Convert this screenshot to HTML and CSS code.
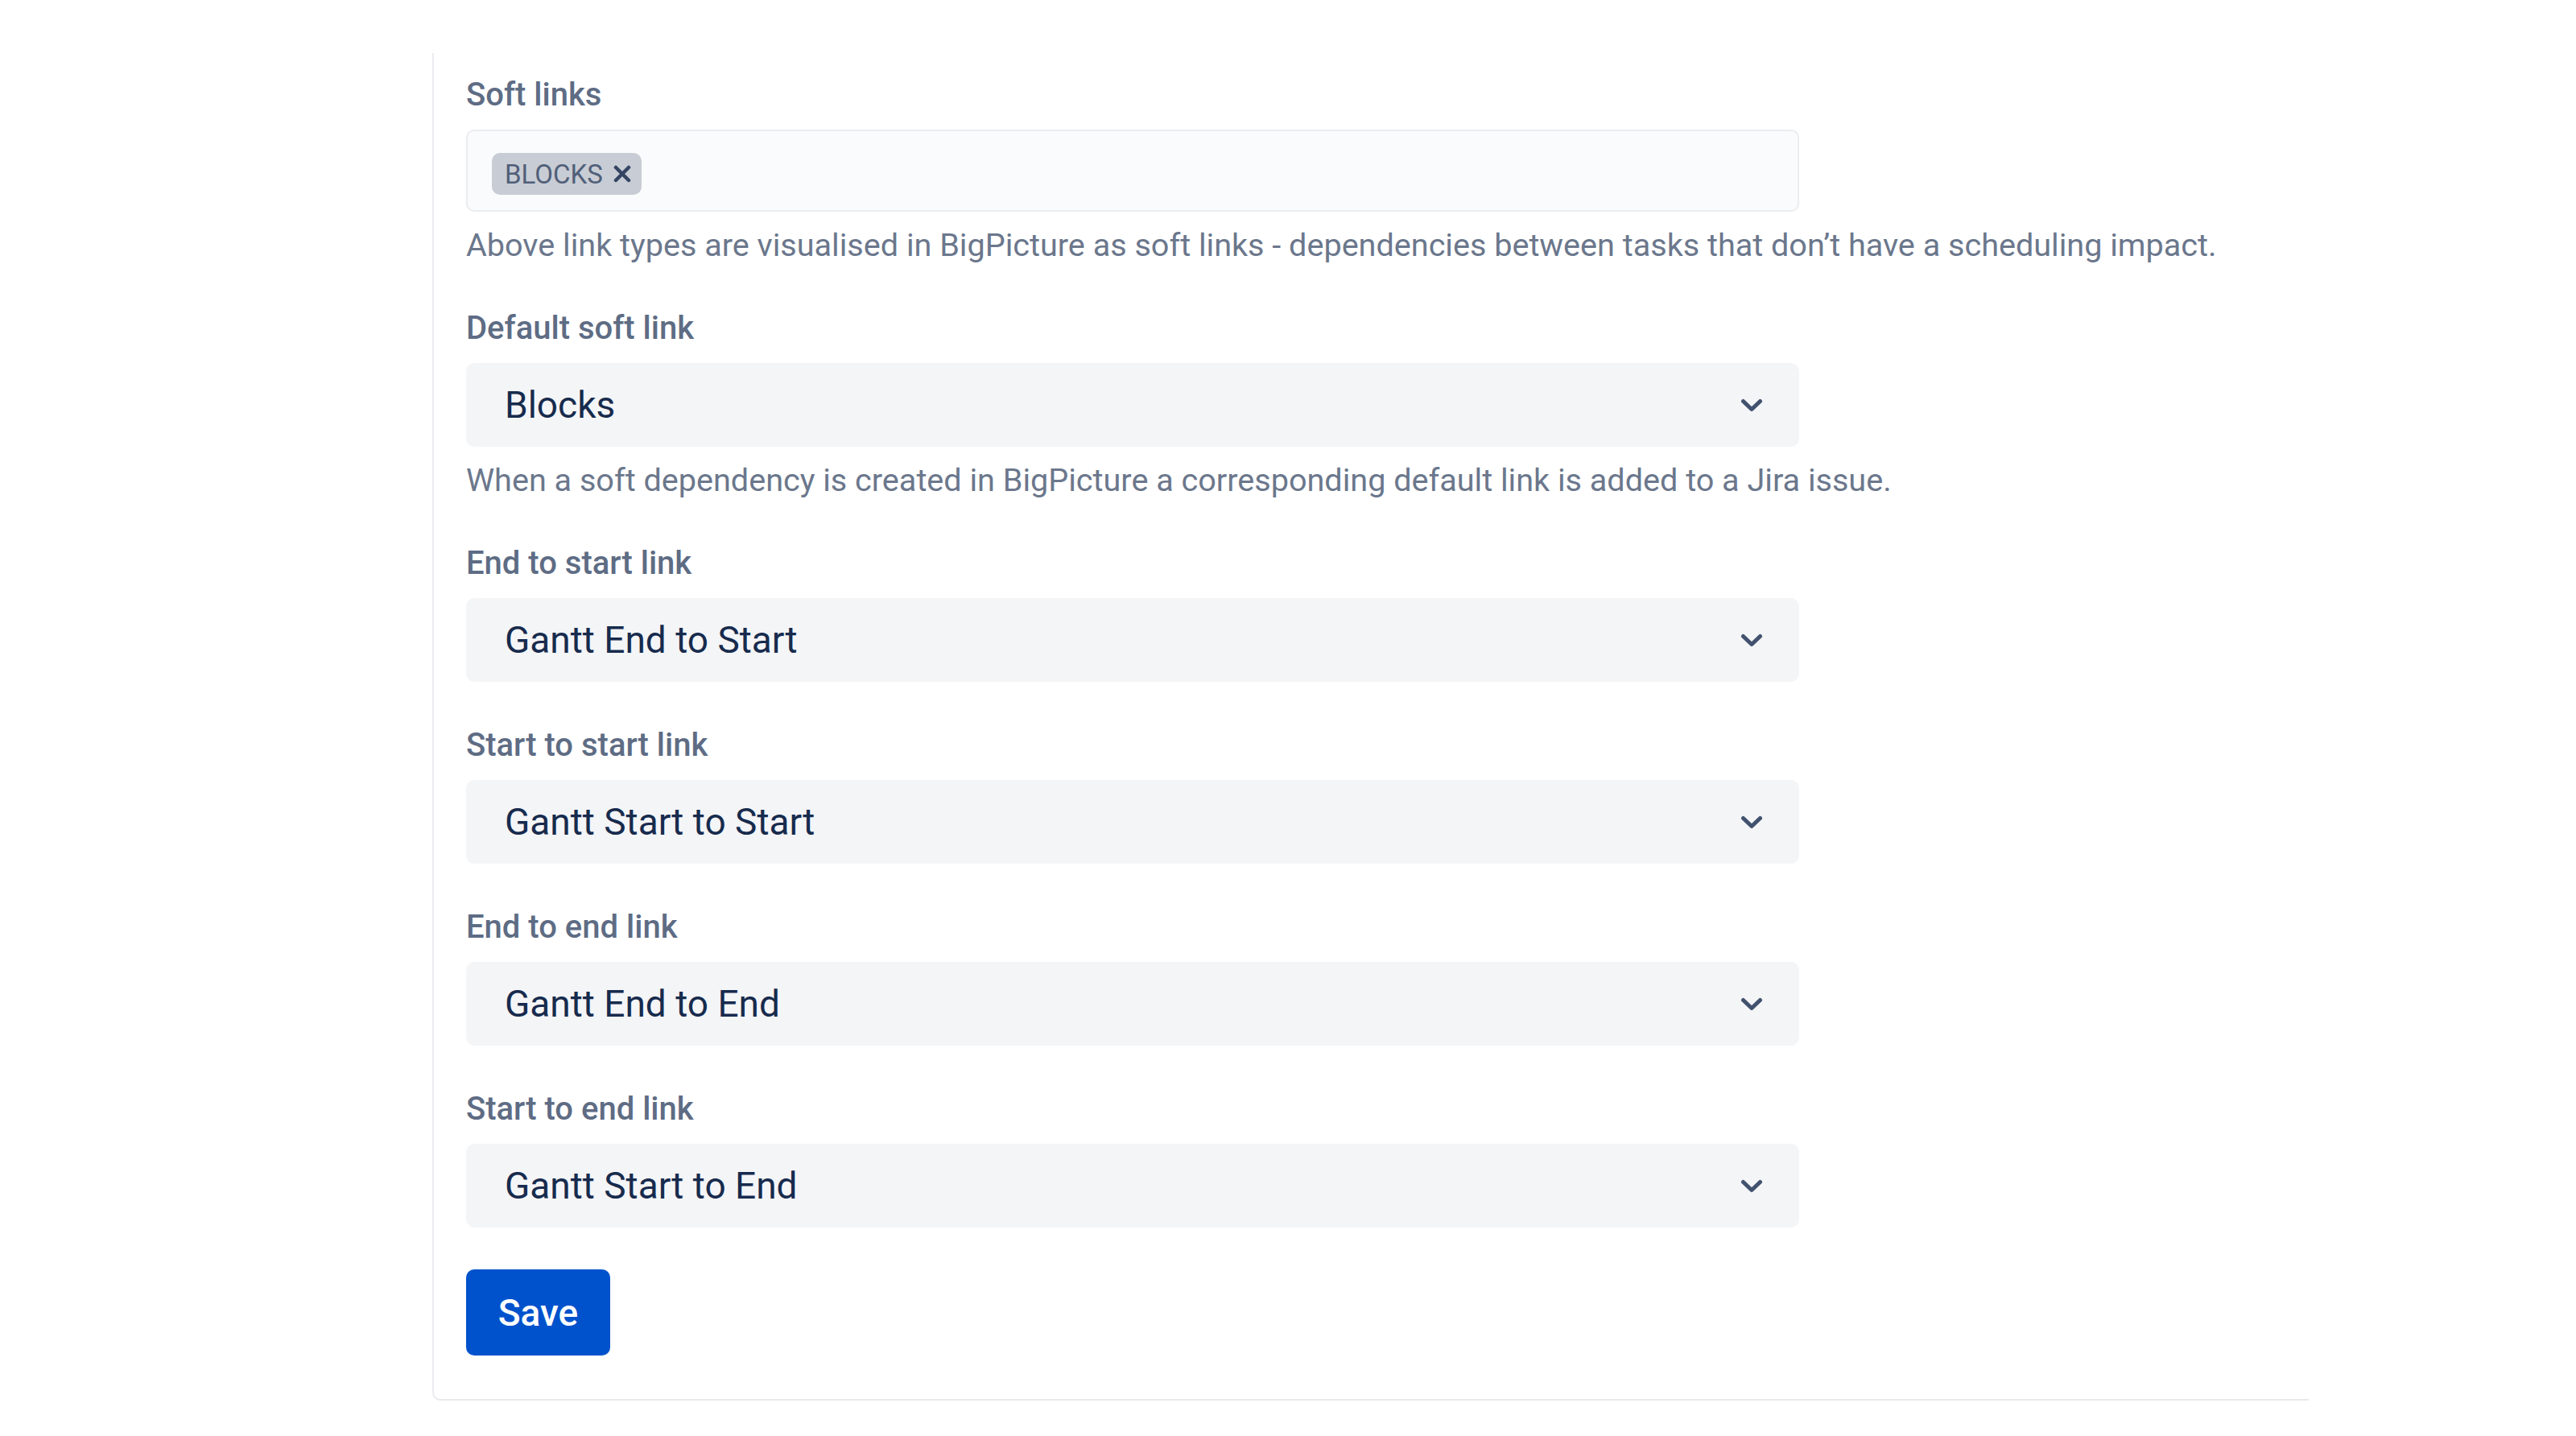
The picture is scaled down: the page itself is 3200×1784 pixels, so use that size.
FILE: index.html
```html
<!DOCTYPE html>
<html lang="en">
<head>
    <meta charset="UTF-8">
    <meta name="viewport" content="width=device-width, initial-scale=1.0">
    <title>Link settings</title>

    <link rel="stylesheet" href="styles.css">
</head>
<body>
    <div class="page">
        <form class="card">
            <div class="field">
                <label class="label">Soft links</label>
                <div class="tag-input">
                    <span class="tag">BLOCKS
                        <svg class="tag-x" viewBox="0 0 24 24" width="24" height="24">
                            <path d="M4 4 L20 20 M20 4 L4 20" stroke="#344563" stroke-width="4.5" stroke-linecap="round"/>
                        </svg>
                    </span>
                </div>
                <p class="help">Above link types are visualised in BigPicture as soft links - dependencies between tasks that don’t have a scheduling impact.</p>
            </div>

            <div class="field">
                <label class="label">Default soft link</label>
                <div class="select">
                    <span>Blocks</span>
                    <svg class="chevron" viewBox="0 0 28 17" width="28" height="17"><path d="M3.5 3.5 L14 13.5 L24.5 3.5"/></svg>
                </div>
                <p class="help">When a soft dependency is created in BigPicture a corresponding default link is added to a Jira issue.</p>
            </div>

            <div class="field">
                <label class="label">End to start link</label>
                <div class="select">
                    <span>Gantt End to Start</span>
                    <svg class="chevron" viewBox="0 0 28 17" width="28" height="17"><path d="M3.5 3.5 L14 13.5 L24.5 3.5"/></svg>
                </div>
            </div>

            <div class="field">
                <label class="label">Start to start link</label>
                <div class="select">
                    <span>Gantt Start to Start</span>
                    <svg class="chevron" viewBox="0 0 28 17" width="28" height="17"><path d="M3.5 3.5 L14 13.5 L24.5 3.5"/></svg>
                </div>
            </div>

            <div class="field">
                <label class="label">End to end link</label>
                <div class="select">
                    <span>Gantt End to End</span>
                    <svg class="chevron" viewBox="0 0 28 17" width="28" height="17"><path d="M3.5 3.5 L14 13.5 L24.5 3.5"/></svg>
                </div>
            </div>

            <div class="field last">
                <label class="label">Start to end link</label>
                <div class="select">
                    <span>Gantt Start to End</span>
                    <svg class="chevron" viewBox="0 0 28 17" width="28" height="17"><path d="M3.5 3.5 L14 13.5 L24.5 3.5"/></svg>
                </div>
            </div>

            <button class="btn-save" type="button">Save</button>
        </form>
    </div>
</body>
</html>
```

FILE: styles.css
```css
*{
    margin: 0;
    padding: 0;
    box-sizing: border-box;
    font-family: Roboto, 'Liberation Sans', sans-serif;
}

body{
    background-color: #fff;
}

.page{
    padding: 66px 0 0 537px;
}

.card{
    width: 2331px;
    padding: 28px 0 54px 40px;
    border-left: 2px solid #ebecf0;
    border-bottom: 2px solid #e8e9ec;
    border-bottom-left-radius: 10px;
    display: flex;
    flex-direction: column;
    align-items: flex-start;
}

.field{
    width: 1656px;
    margin-bottom: 55px;
}

.field.last{
    margin-bottom: 52px;
}

.label{
    display: block;
    font-size: 40px;
    line-height: 48px;
    font-weight: 500;
    color: #5e6c84;
    margin-bottom: 19px;
}

.tag-input{
    height: 102px;
    background-color: #fafbfc;
    border: 2px solid #ebecf0;
    border-radius: 10px;
    padding: 27px 30px 0;
}

.tag{
    display: inline-flex;
    align-items: center;
    gap: 12px;
    height: 52px;
    padding: 0 12px 0 16px;
    background-color: #c8ccd4;
    border-radius: 10px;
    font-size: 33px;
    color: #505f79;
}

.tag-x{
    width: 24px;
    height: 24px;
}

.help{
    margin-top: 18px;
    font-size: 39.6px;
    line-height: 48px;
    color: #6b778c;
    white-space: nowrap;
}

.select{
    height: 104px;
    background-color: #f4f5f7;
    border-radius: 10px;
    display: flex;
    align-items: center;
    justify-content: space-between;
    padding: 0 45px 0 48px;
    font-size: 46px;
    color: #172b4d;
}

.chevron path{
    fill: none;
    stroke: #42526e;
    stroke-width: 5;
    stroke-linecap: round;
    stroke-linejoin: round;
}

.btn-save{
    width: 179px;
    height: 107px;
    background-color: #0052cc;
    color: #fff;
    border: none;
    border-radius: 10px;
    font-size: 46px;
    font-weight: 500;
    cursor: pointer;
}
```
